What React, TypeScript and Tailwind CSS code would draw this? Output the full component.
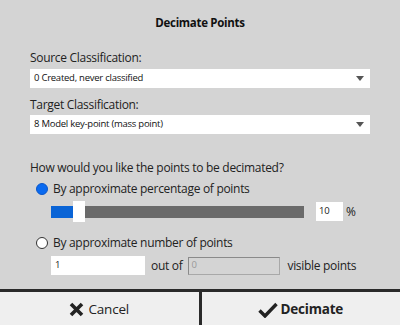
import React from "react";

const font = { fontFamily: '"Open Sans", "Noto Sans", sans-serif' };

function Caret() {
  return (
    <svg width="8" height="5" viewBox="0 0 8 5" className="mr-[3px]">
      <path d="M0 0h8L4 5z" fill="#555" />
    </svg>
  );
}

function Select({ value }: { value: string }) {
  return (
    <div className="flex h-[19px] items-center justify-between bg-white pl-[4px] pr-[3px] text-[9.5px] tracking-[-0.25px] text-[#111]">
      <span>{value}</span>
      <Caret />
    </div>
  );
}

function XIcon() {
  return (
    <svg width="15" height="15" viewBox="0 0 15 15">
      <path d="M2 2L13 13M13 2L2 13" stroke="#222" strokeWidth="3.6" strokeLinecap="butt" />
    </svg>
  );
}

function CheckIcon() {
  return (
    <svg width="20" height="16" viewBox="0 0 20 16">
      <path d="M1.5 8.5L7 14L18.5 2" stroke="#222" strokeWidth="3.4" fill="none" />
    </svg>
  );
}

export default function App() {
  return (
    <div style={font} className="flex h-[325px] w-[400px] flex-col bg-[#d4d4d4] text-[12px] tracking-[-0.3px] text-[#222]">
      <div className="flex-1 px-[30px]">
        <div className="mt-[13px] h-[20px] text-center text-[11.5px] font-bold leading-[20px] text-[#111]">
          Decimate Points
        </div>

        <div className="mt-[16px] h-[18px] leading-[18px]">Source Classification:</div>
        <div className="mt-[2px]">
          <Select value="0 Created, never classified" />
        </div>

        <div className="mt-[8px] h-[18px] leading-[18px]">Target Classification:</div>
        <div className="mt-[1px]">
          <Select value="8 Model key-point (mass point)" />
        </div>

        <div className="mt-[25px] h-[18px] leading-[18px]">
          How would you like the points to be decimated?
        </div>

        <div className="mt-[3px] flex h-[18px] items-center pl-[6px]">
          <span className="h-[12px] w-[12px] rounded-full border border-[#0b57c9] bg-[#0a6af0]" />
          <span className="ml-[5px]">By approximate percentage of points</span>
        </div>

        <div className="mt-[3px] flex h-[21px] items-center pl-[21px]">
          <div className="flex h-[21px] w-[253px] items-center">
            <div className="h-[12px] w-[22px] bg-[#0a64d6]" />
            <div className="h-[21px] w-[12px] bg-white" />
            <div className="h-[12px] flex-1 bg-[#6a6a6a]" />
          </div>
          <div className="ml-[12px] flex h-[19px] w-[27px] items-center bg-white pl-[3px] text-[9.5px]">
            10
          </div>
          <span className="ml-[3px]">%</span>
        </div>

        <div className="mt-[12px] flex h-[18px] items-center pl-[6px]">
          <span className="h-[12px] w-[12px] rounded-full border border-[#333] bg-white" />
          <span className="ml-[5px]">By approximate number of points</span>
        </div>

        <div className="mt-[4px] flex h-[19px] items-center pl-[21px]">
          <div className="flex h-[19px] w-[94px] items-center bg-white pl-[4px] text-[9.5px]">1</div>
          <span className="ml-[6px]">out of</span>
          <div className="ml-[6px] flex h-[18px] w-[92px] items-center border border-[#a8a8a8] border-t-[#8a8a8a] border-l-[#8a8a8a] bg-[#d4d4d4] pl-[2px] text-[9.5px] text-[#999]">
            0
          </div>
          <span className="ml-[7px]">visible points</span>
        </div>
      </div>

      <div className="flex h-[36px] border-t-[3px] border-[#2a2a2a] bg-[#efefef]">
        <button className="flex flex-1 items-center justify-center gap-[4px] border-r-[3px] border-[#2a2a2a] pt-[2px] text-[13.5px] tracking-[-0.2px] text-[#222]">
          <XIcon />
          <span>Cancel</span>
        </button>
        <button className="flex flex-1 items-center justify-center gap-[2px] pt-[2px] text-[13.5px] font-bold tracking-[-0.2px] text-[#222]">
          <CheckIcon />
          <span>Decimate</span>
        </button>
      </div>
    </div>
  );
}
